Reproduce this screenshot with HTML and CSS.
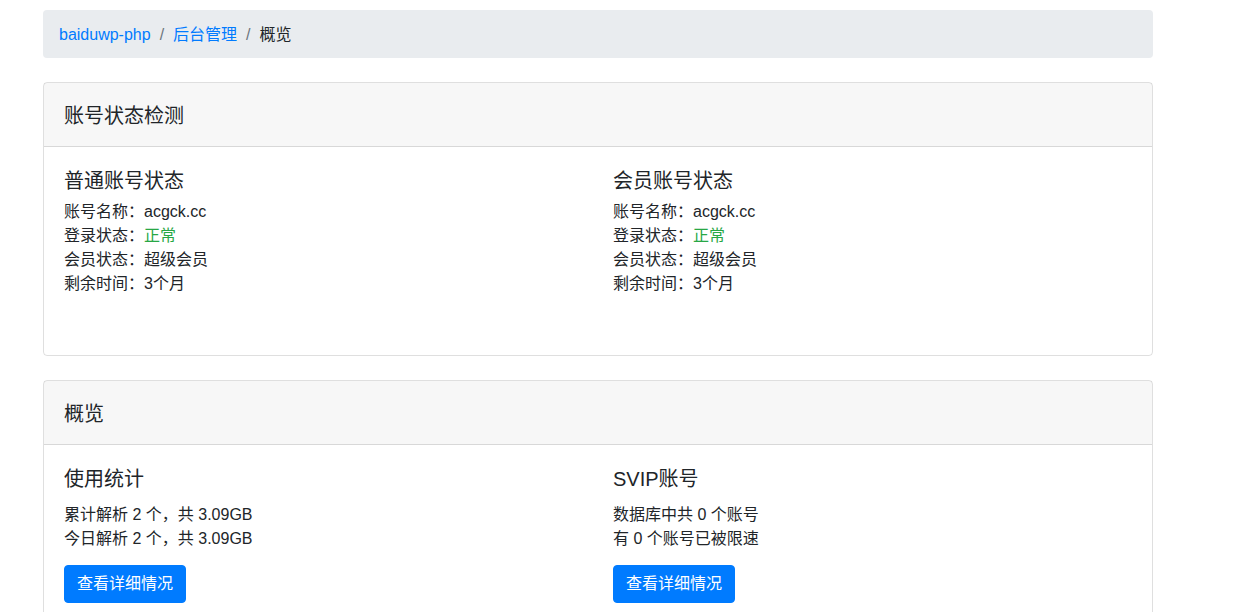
FILE: index.html
```html
<!DOCTYPE html>
<html lang="zh-CN">
	<head>
		<meta charset="UTF-8" />
		<meta name="viewport" content="width=device-width, initial-scale=1.0" />
		<title>概览 - baiduwp-php</title>
		<link rel="stylesheet" href="styles.css">
	</head>
	<body>
		<div class="container">
			<nav class="breadcrumb">
				<a href="#">baiduwp-php</a>
				<span class="divider">/</span>
				<a href="#">后台管理</a>
				<span class="divider">/</span>
				<span class="active">概览</span>
			</nav>

			<div class="card">
				<div class="card-header">账号状态检测</div>
				<div class="card-body row spaced">
					<div class="col">
						<h5 class="col-title">普通账号状态</h5>
						<div>账号名称：acgck.cc</div>
						<div>登录状态：<span class="text-success">正常</span></div>
						<div>会员状态：超级会员</div>
						<div>剩余时间：3个月</div>
					</div>
					<div class="col">
						<h5 class="col-title">会员账号状态</h5>
						<div>账号名称：acgck.cc</div>
						<div>登录状态：<span class="text-success">正常</span></div>
						<div>会员状态：超级会员</div>
						<div>剩余时间：3个月</div>
					</div>
				</div>
			</div>

			<div class="card">
				<div class="card-header">概览</div>
				<div class="card-body row">
					<div class="col">
						<h5 class="col-title big-gap">使用统计</h5>
						<p>累计解析 2 个，共 3.09GB<br />今日解析 2 个，共 3.09GB</p>
						<a class="btn" href="#">查看详细情况</a>
					</div>
					<div class="col">
						<h5 class="col-title big-gap">SVIP账号</h5>
						<p>数据库中共 0 个账号<br />有 0 个账号已被限速</p>
						<a class="btn" href="#">查看详细情况</a>
					</div>
				</div>
			</div>
		</div>
	</body>
</html>
```

FILE: styles.css
```css
* {
	box-sizing: border-box;
}
body {
	margin: 0;
	font-family: "Liberation Sans", "Noto Sans CJK SC", sans-serif;
	font-size: 16px;
	line-height: 24px;
	color: #212529;
	background: #fff;
}
a {
	color: #007bff;
	text-decoration: none;
}
.container {
	width: 1110px;
	margin-left: 43px;
	padding-top: 10px;
}
.breadcrumb {
	display: flex;
	background: #e9ecef;
	border-radius: 4px;
	padding: 13px 16px 11px;
	margin-bottom: 24px;
}
.breadcrumb .divider {
	color: #6c757d;
	padding: 0 9px;
}
.card {
	border: 1px solid rgba(0, 0, 0, 0.125);
	border-radius: 4px;
	margin-bottom: 24px;
}
.card-header {
	background: rgba(0, 0, 0, 0.03);
	border-bottom: 1px solid rgba(0, 0, 0, 0.125);
	padding: 21px 20px 18px;
	font-size: 20px;
	line-height: 24px;
}
.card-body {
	padding: 22px 20px 20px;
}
.row {
	display: grid;
	grid-template-columns: 1fr 1fr;
	column-gap: 30px;
}
.spaced {
	padding-bottom: 59px;
}
.col-title {
	margin: 0 0 7px;
	font-size: 20px;
	font-weight: 400;
	line-height: 24px;
}
.big-gap {
	margin-bottom: 12px;
}
p {
	margin: 0 0 14px;
}
.text-success {
	color: #28a745;
}
.btn {
	display: inline-block;
	background: #007bff;
	border: 1px solid #007bff;
	color: #fff;
	border-radius: 4px;
	padding: 6px 12px;
	line-height: 24px;
}
```
